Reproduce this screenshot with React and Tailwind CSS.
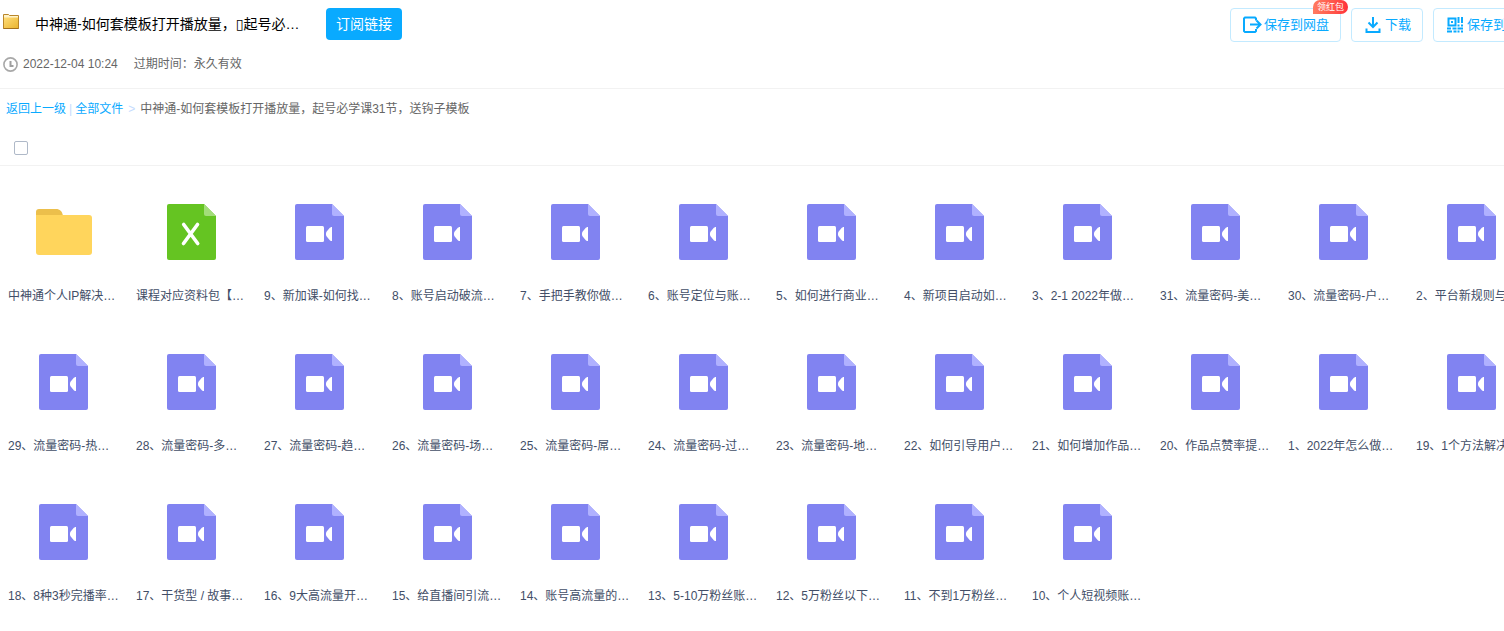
import clsx from 'clsx';

const FILES = [
  { type: 'folder', name: '中神通个人IP解决…' },
  { type: 'excel', name: '课程对应资料包【…' },
  { type: 'video', name: '9、新加课-如何找…' },
  { type: 'video', name: '8、账号启动破流…' },
  { type: 'video', name: '7、手把手教你做…' },
  { type: 'video', name: '6、账号定位与账…' },
  { type: 'video', name: '5、如何进行商业…' },
  { type: 'video', name: '4、新项目启动如…' },
  { type: 'video', name: '3、2-1 2022年做…' },
  { type: 'video', name: '31、流量密码-美…' },
  { type: 'video', name: '30、流量密码-户…' },
  { type: 'video', name: '2、平台新规则与' },
  { type: 'video', name: '29、流量密码-热…' },
  { type: 'video', name: '28、流量密码-多…' },
  { type: 'video', name: '27、流量密码-趋…' },
  { type: 'video', name: '26、流量密码-场…' },
  { type: 'video', name: '25、流量密码-屌…' },
  { type: 'video', name: '24、流量密码-过…' },
  { type: 'video', name: '23、流量密码-地…' },
  { type: 'video', name: '22、如何引导用户…' },
  { type: 'video', name: '21、如何增加作品…' },
  { type: 'video', name: '20、作品点赞率提…' },
  { type: 'video', name: '1、2022年怎么做…' },
  { type: 'video', name: '19、1个方法解决' },
  { type: 'video', name: '18、8种3秒完播率…' },
  { type: 'video', name: '17、干货型 / 故事…' },
  { type: 'video', name: '16、9大高流量开…' },
  { type: 'video', name: '15、给直播间引流…' },
  { type: 'video', name: '14、账号高流量的…' },
  { type: 'video', name: '13、5-10万粉丝账…' },
  { type: 'video', name: '12、5万粉丝以下…' },
  { type: 'video', name: '11、不到1万粉丝…' },
  { type: 'video', name: '10、个人短视频账…' },
];

function FileIcon({ type }) {
  if (type === 'folder') {
    return (
      <svg viewBox="0 0 56 56" className="w-14 h-14" aria-hidden="true">
        <path d="M0 8a3 3 0 0 1 3-3h17c4 0 6 2 7 7v3H0z" fill="#ecbf4b" />
        <path d="M0 11h53a3 3 0 0 1 3 3v34a3 3 0 0 1-3 3H3a3 3 0 0 1-3-3z" fill="#ffd55c" />
      </svg>
    );
  }

  const isVideo = type === 'video';
  return (
    <svg viewBox="0 0 56 56" className="w-14 h-14" aria-hidden="true">
      <path d="M5 0h35l12 12v42a2 2 0 0 1-2 2H5a2 2 0 0 1-2-2V2a2 2 0 0 1 2-2z" fill={isVideo ? '#8183f1' : '#65c422'} />
      <path d="M40 0l12 12H42a2 2 0 0 1-2-2z" fill={isVideo ? '#b0b1ff' : '#a3dd7a'} />
      {isVideo ? (
        <>
          <rect x="14" y="22" width="18" height="16" rx="1.5" fill="#fff" />
          <path d="M40 23v14c-1.200 0-2-.5-2.800-1.500L34.500 32.200c-.7-1.200-.7-3.200 0-4.400l2.700-3.300c.8-1 1.600-1.500 2.800-1.500z" fill="#fff" />
        </>
      ) : (
        <path d="M19.700 20.500l14 19M33.500 20.500l-14 19" stroke="#fff" strokeWidth="3.600" strokeLinecap="round" fill="none" />
      )}
    </svg>
  );
}

function SmallFolder() {
  return (
    <svg viewBox="0 0 16 15" className="w-4 h-[15px] shrink-0" aria-hidden="true">
      <defs>
        <linearGradient id="folder" x1="0" y1="0" x2="1" y2="1">
          <stop offset="0" stopColor="#ffdc78" />
          <stop offset="1" stopColor="#eab530" />
        </linearGradient>
      </defs>
      <path d="M.5 14.500V.5h5l1 1h9v13z" fill="#fff3c8" stroke="#b9862a" />
      <path d="M1 3.500h14V14H1z" fill="url(#folder)" />
      <path d="M.5 14.500h15" stroke="#a4701c" />
    </svg>
  );
}

function ClockIcon() {
  return (
    <svg viewBox="0 0 15 15" className="w-[15px] h-[15px] shrink-0" fill="none" aria-hidden="true">
      <circle cx="7.500" cy="7.500" r="6.600" stroke="#a8a8a8" strokeWidth="1.600" />
      <path d="M7.500 4V9H10.500" stroke="#a0a0a0" strokeWidth="2" />
    </svg>
  );
}

function SaveIcon() {
  return (
    <svg viewBox="0 0 19 18" className="w-[19px] h-[18px] shrink-0" fill="none" stroke="#09aaff" strokeWidth="2" aria-hidden="true">
      <path d="M13 4.500V2.500L12 1.500H2L1 2.500v12.500L2 16h10l1-1v-2" />
      <path d="M7 8.500h10M13.500 4.500l4 4-4 4" />
    </svg>
  );
}

function DownloadIcon() {
  return (
    <svg viewBox="0 0 16 18" className="w-4 h-[18px] shrink-0" fill="none" stroke="#09aaff" strokeWidth="2" aria-hidden="true">
      <path d="M8 1v10.500M3.500 6.500L8 11l4.500-4.500M1.500 12.500V16h13v-3.500" />
    </svg>
  );
}

function QrIcon() {
  return (
    <svg viewBox="0 0 16 16" className="w-4 h-4 shrink-0" fill="none" stroke="#09aaff" aria-hidden="true">
      <rect x="1.500" y="1.500" width="7" height="7" strokeWidth="2" />
      <path d="M4 5h2" strokeWidth="2" />
      <path d="M11.500 0v6M11.500 7.500v2M15 0v6M15 7.500v2" strokeWidth="2" />
      <path d="M0 11.500h4M5.500 11.500h4M0 14.500h5M6.500 14.500h3M10.500 11.500H16M10.500 14.500h2M14 14.500h2" strokeWidth="2" />
    </svg>
  );
}

function ActionButton({ icon, label, badge, className }) {
  return (
    <button
      type="button"
      className={clsx('relative flex items-center h-[34px] shrink-0 rounded border border-[#c3eaff] bg-white text-[13px] text-[#09aaff] whitespace-nowrap', className)}
    >
      {icon}
      {label}
      {badge && (
        <span className="absolute -top-[9px] -right-2 h-3.5 px-1 rounded-full rounded-bl-none bg-gradient-to-r from-[#ff7a60] to-[#ff2f3a] text-[9px] leading-[14px] text-white">
          {badge}
        </span>
      )}
    </button>
  );
}

export default function App() {
  return (
    <div className="min-h-screen overflow-hidden bg-white text-xs text-[#666] font-['Liberation_Sans','Noto_Sans_CJK_SC',sans-serif]">
      <header className="border-b border-[#f2f2f2] pt-2 pb-3.5">
        <div className="flex items-start">
          <div className="flex items-start h-8 pl-[3px] pt-1.5">
            <SmallFolder />
            <h1 className="ml-4 w-[275px] text-sm text-black whitespace-nowrap">
              中神通-如何套模板打开播放量，
              <span className="font-['DejaVu_Sans',sans-serif]">▯</span>
              起号必…
            </h1>
          </div>
          <button type="button" className="ml-4 h-8 w-[76px] shrink-0 rounded bg-[#09aaff] text-sm text-white">
            订阅链接
          </button>
          <div className="ml-auto -mr-[11px] flex gap-2.5">
            <ActionButton icon={<SaveIcon />} label="保存到网盘" badge="领红包" className="gap-0.5 pl-3 pr-[11px]" />
            <ActionButton icon={<DownloadIcon />} label="下载" className="gap-1 pl-[13px] pr-[11px]" />
            <ActionButton icon={<QrIcon />} label="保存到" className="gap-1 pl-[13px] pr-2" />
          </div>
        </div>
        <div className="mt-3 flex items-center h-5 pl-[3px]">
          <ClockIcon />
          <span className="ml-[5px]">2022-12-04 10:24</span>
          <span className="ml-4">过期时间：永久有效</span>
        </div>
      </header>

      <nav className="flex items-center h-10 pl-1.5 whitespace-nowrap">
        <a href="#back" className="text-[#09aaff]">返回上一级</a>
        <span className="mx-[3px] text-[#c4dbfe]">|</span>
        <a href="#all" className="text-[#09aaff]">全部文件</a>
        <span className="mx-[5px] text-[#c4dbfe]">&gt;</span>
        <span>中神通-如何套模板打开播放量，起号必学课31节，送钩子模板</span>
      </nav>

      <div className="flex items-center h-[37px] border-b border-[#f2f2f2] pt-0.5 pl-3.5">
        <input
          type="checkbox"
          aria-label="全选"
          className="appearance-none w-3.5 h-3.5 rounded-xs border border-[#afb9c8] bg-white checked:bg-[#09aaff]"
        />
      </div>

      <ul className="grid grid-cols-[repeat(12,128px)] gap-y-12 pt-[38px] pb-6">
        {FILES.map(f => (
          <li key={f.name} className="flex flex-col items-center">
            <FileIcon type={f.type} />
            <a href="#file" className="mt-[26px] h-5 w-28 leading-5 text-[#424e67] whitespace-nowrap">
              {f.name}
            </a>
          </li>
        ))}
      </ul>
    </div>
  );
}
